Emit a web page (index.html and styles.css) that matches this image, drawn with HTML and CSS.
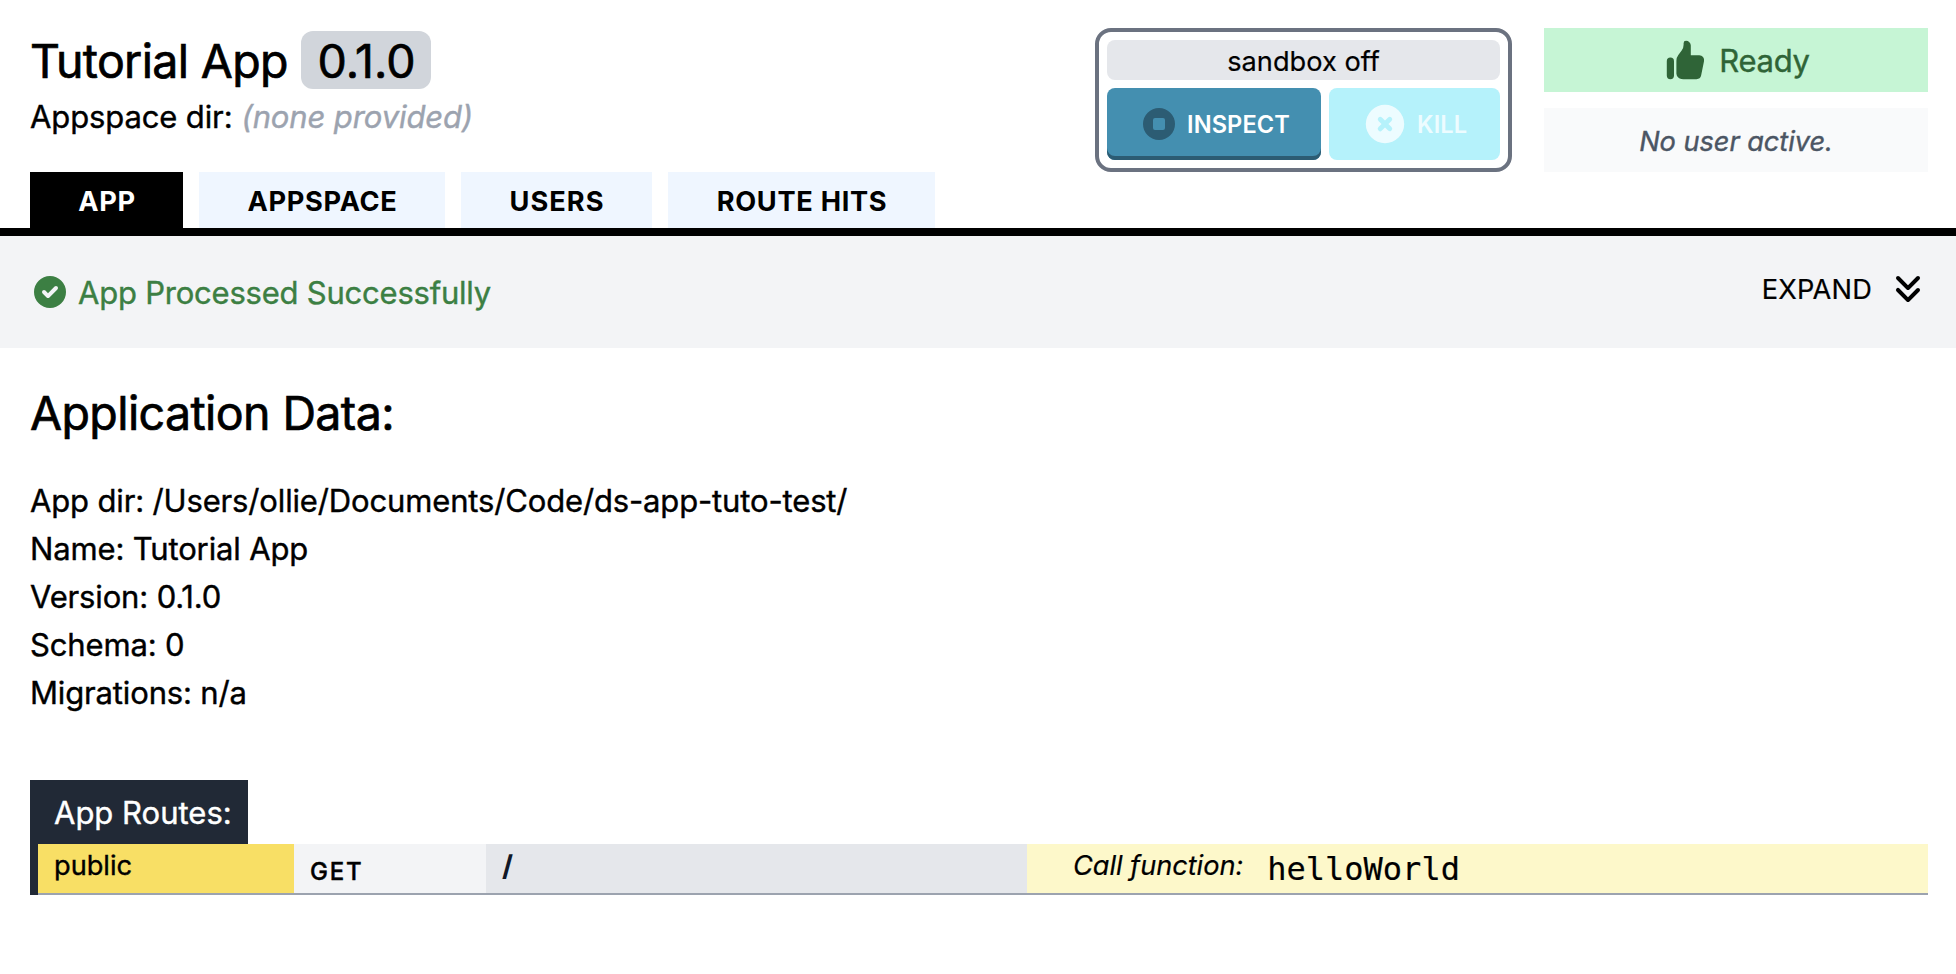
FILE: index.html
```
<!DOCTYPE html>
<html lang="en">
<head>
<meta charset="utf-8">
<title>Tutorial App</title>
<link rel="stylesheet" href="styles.css">
</head>
<body>
<header class="header">
  <div class="header-main">
    <h1 class="title"><span class="title-name">Tutorial App</span><span class="version">0.1.0</span></h1>
    <p class="appspace"><span>Appspace dir:</span><em class="none">(none provided)</em></p>
    <nav class="tabs">
      <a class="tab tab-app active">APP</a>
      <a class="tab tab-appspace">APPSPACE</a>
      <a class="tab tab-users">USERS</a>
      <a class="tab tab-hits">ROUTE HITS</a>
    </nav>
  </div>
  <section class="sandbox">
    <div class="sandbox-state">sandbox off</div>
    <div class="sandbox-buttons">
      <button class="btn inspect">
        <svg class="icon-md" viewBox="0 0 20 20"><path fill-rule="evenodd" d="M10 18a8 8 0 100-16 8 8 0 000 16zM8 7a1 1 0 00-1 1v4a1 1 0 001 1h4a1 1 0 001-1V8a1 1 0 00-1-1H8z"/></svg>
        <span>INSPECT</span>
      </button>
      <button class="btn kill">
        <svg class="icon-lg" viewBox="0 0 20 20"><path fill-rule="evenodd" d="M10 18a8 8 0 100-16 8 8 0 000 16zM8.707 7.293a1 1 0 00-1.414 1.414L8.586 10l-1.293 1.293a1 1 0 101.414 1.414L10 11.414l1.293 1.293a1 1 0 001.414-1.414L11.414 10l1.293-1.293a1 1 0 00-1.414-1.414L10 8.586 8.707 7.293z"/></svg>
        <span>KILL</span>
      </button>
    </div>
  </section>
  <section class="status">
    <div class="ready">
      <svg class="icon-lg" viewBox="0 0 20 20"><path d="M2 10.5a1.5 1.5 0 113 0v6a1.5 1.5 0 01-3 0v-6zM6 10.333v5.43a2 2 0 001.106 1.79l.05.025A4 4 0 008.943 18h5.416a2 2 0 001.962-1.608l1.2-6A2 2 0 0015.56 8H12V4a2 2 0 00-2-2 1 1 0 00-1 1v.667a4 4 0 01-.8 2.4L6.8 7.933a4 4 0 00-.8 2.4z"/></svg>
      <span>Ready</span>
    </div>
    <div class="user">No user active.</div>
  </section>
</header>
<section class="process">
  <div class="process-state">
    <svg class="icon-md" viewBox="0 0 20 20"><path fill-rule="evenodd" d="M10 18a8 8 0 100-16 8 8 0 000 16zm3.707-9.293a1 1 0 00-1.414-1.414L9 10.586 7.707 9.293a1 1 0 00-1.414 1.414l2 2a1 1 0 001.414 0l4-4z"/></svg>
    <span>App Processed Successfully</span>
  </div>
  <div class="expand">
    <span>EXPAND</span>
    <svg class="icon-md" viewBox="0 0 20 20"><path fill-rule="evenodd" d="M15.707 4.293a1 1 0 010 1.414l-5 5a1 1 0 01-1.414 0l-5-5a1 1 0 011.414-1.414L10 8.586l4.293-4.293a1 1 0 011.414 0zm0 6a1 1 0 010 1.414l-5 5a1 1 0 01-1.414 0l-5-5a1 1 0 111.414-1.414L10 14.586l4.293-4.293a1 1 0 011.414 0z"/></svg>
  </div>
</section>
<main class="content">
  <h2 class="heading">Application Data:</h2>
  <ul class="facts">
    <li>App dir: /Users/ollie/Documents/Code/ds-app-tuto-test/</li>
    <li>Name: Tutorial App</li>
    <li>Version: 0.1.0</li>
    <li>Schema: 0</li>
    <li>Migrations: n/a</li>
  </ul>
  <section class="routes">
    <h3 class="routes-title">App Routes:</h3>
    <div class="route">
      <div class="access">public</div>
      <div class="method">GET</div>
      <div class="path">/</div>
      <div class="handler"><em class="call">Call function:</em><code class="fn">helloWorld</code></div>
    </div>
  </section>
</main>
</body>
</html>
```

FILE: styles.css
```
* { box-sizing: border-box; margin: 0; padding: 0; }

body {
  font: 400 31px/48px Inter, sans-serif;
  color: #000;
  background: #fff;
  -webkit-text-stroke: 0.4px currentColor;
}

svg { display: block; flex: none; fill: currentColor; }
.icon-md { width: 40px; height: 40px; }
.icon-lg { width: 48px; height: 48px; }

.header {
  display: flex;
  height: 236px;
  padding: 28px 28px 0 30px;
  border-bottom: 8px solid #000;
}
.header-main { flex: 1; }
.title {
  display: flex;
  align-items: center;
  gap: 13px;
  height: 64px;
  font-size: 46.5px;
  font-weight: 400;
  line-height: 58px;
  -webkit-text-stroke: 0.7px currentColor;
}
.title-name { width: 258px; padding-top: 1px; letter-spacing: -0.65px; white-space: nowrap; }
.version {
  width: 130px;
  height: 58px;
  padding: 1px 0 0 1px;
  border-radius: 12px;
  background: #d1d5db;
  text-align: center;
}
.appspace { display: flex; gap: 9px; padding-top: 1px; letter-spacing: -0.12px; }
.none { color: #9ca3af; letter-spacing: -0.12px; }

.tabs { display: flex; gap: 16px; margin-top: 31px; -webkit-text-stroke: 0; }
.tab {
  height: 56px;
  padding: 2px 0 0 1px;
  background: #eff6ff;
  font-size: 27.2px;
  font-weight: 700;
  line-height: 56px;
  letter-spacing: 0.7px;
  text-align: center;
}
.tab.active { background: #000; color: #fff; }
.tab-app { width: 153px; }
.tab-appspace { width: 246px; }
.tab-users { width: 191px; letter-spacing: 1px; }
.tab-hits { width: 267px; }

.sandbox {
  display: flex;
  flex-direction: column;
  gap: 8px;
  width: 417px;
  height: 144px;
  margin-right: 32px;
  padding: 8px;
  border: 4px solid #6b7280;
  border-radius: 16px;
}
.sandbox-state {
  height: 40px;
  padding-top: 2px;
  border-radius: 8px;
  background: #e5e7eb;
  font-size: 27.2px;
  line-height: 40px;
  text-align: center;
  -webkit-text-stroke: 0.2px currentColor;
}
.sandbox-buttons { display: flex; gap: 8px; height: 72px; -webkit-text-stroke: 0; }
.btn {
  display: flex;
  align-items: center;
  border: 0;
  border-radius: 8px;
  font: 600 23.6px/32px Inter, sans-serif;
  letter-spacing: 0.1px;
  color: #fff;
}
.btn span { padding-top: 2px; }
.inspect {
  gap: 8px;
  width: 214px;
  padding-left: 32px;
  background: #448fb0;
  box-shadow: inset 0 -4px #2c5c73;
}
.inspect svg { color: #2c5c73; }
.kill {
  gap: 8px;
  width: 171px;
  padding-left: 32px;
  background: #b5f2fb;
  color: #edfcff;
}

.status { display: flex; flex-direction: column; gap: 16px; width: 384px; }
.ready, .user { display: flex; align-items: center; justify-content: center; height: 64px; }
.ready { gap: 9px; background: #c6f5d5; color: #2f6437; letter-spacing: -0.3px; }
.ready span { padding-top: 1px; }
.user {
  padding-top: 3px;
  background: #f9fafb;
  color: #4b5563;
  font-size: 27.2px;
  font-style: italic;
  letter-spacing: -0.05px;
}

.process {
  display: flex;
  justify-content: space-between;
  height: 112px;
  padding: 32px 28px 0 30px;
  background: #f3f4f6;
}
.process-state {
  display: flex;
  align-items: center;
  gap: 8px;
  height: 48px;
  color: #3c7f43;
  letter-spacing: -0.22px;
}
.process-state span { padding-top: 1px; }
.expand {
  display: flex;
  align-items: center;
  gap: 16px;
  height: 40px;
  font-size: 27.2px;
  letter-spacing: 0.2px;
  -webkit-text-stroke: 0.2px currentColor;
}
.expand span { padding-top: 3px; }

.content { padding: 32px 28px 0 30px; }
.heading {
  padding-top: 1px;
  font-size: 46.5px;
  font-weight: 400;
  line-height: 64px;
  letter-spacing: -0.6px;
  -webkit-text-stroke: 0.7px currentColor;
}
.facts { margin-top: 32px; list-style: none; letter-spacing: -0.15px; }

.routes { margin-top: 63px; border-left: 8px solid #212936; }
.routes-title {
  width: 210px;
  height: 64px;
  padding-left: 16px;
  background: #212936;
  color: #fff;
  font-size: 31px;
  font-weight: 400;
  line-height: 65px;
  white-space: nowrap;
}
.route {
  display: grid;
  grid-template-columns: 256px 192px 541px 1fr;
  grid-template-rows: 49px;
  height: 51px;
  border-bottom: 2px solid #9ca3af;
  font-size: 27.2px;
  line-height: 44px;
}
.access { padding-left: 16px; background: #f8df65; }
.method {
  padding: 7px 0 0 16px;
  background: #f3f4f6;
  font-size: 24px;
  font-weight: 500;
  line-height: 42px;
  letter-spacing: 1.8px;
}
.path {
  padding-left: 16px;
  background: #e5e7eb;
  color: #111827;
  font-size: 28.5px;
  font-weight: 700;
  -webkit-text-stroke: 0;
}
.handler { display: flex; gap: 24px; padding-left: 46px; background: #fdf8ca; }
.call { letter-spacing: -0.05px; -webkit-text-stroke: 0.2px currentColor; }
.fn { padding-top: 4px; font: 32px/42px "DejaVu Sans Mono", monospace; -webkit-text-stroke: 0.2px currentColor; }
```
